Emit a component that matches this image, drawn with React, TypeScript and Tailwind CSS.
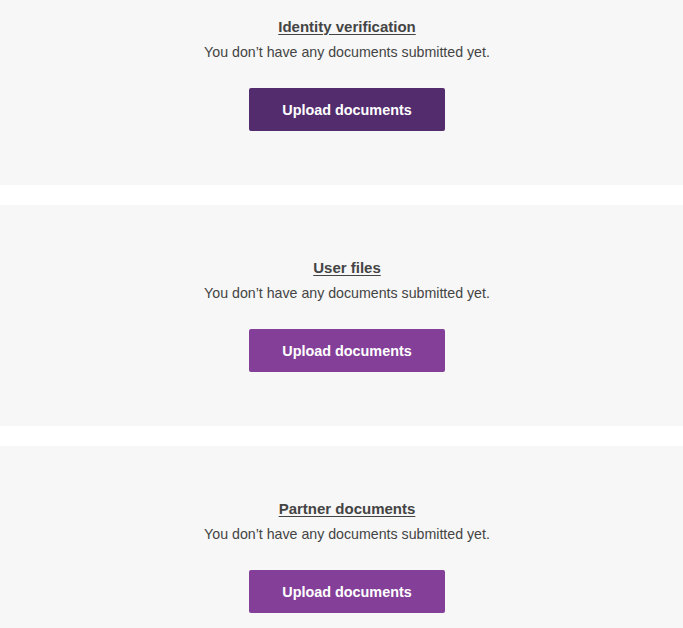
import React from 'react';

const sections = [
  { title: 'Identity verification', btn: 'bg-[#532c6e]' },
  { title: 'User files', btn: 'bg-[#843f99]' },
  { title: 'Partner documents', btn: 'bg-[#843f99]' },
];

export default function App() {
  return (
    <div className="min-h-screen bg-white overflow-hidden font-['Liberation_Sans',Arial,sans-serif] text-[#444]">
      <div className="-mt-[36px] flex flex-col gap-[20px]">
        {sections.map(s => (
          <section key={s.title} className="h-[221px] bg-[#f7f7f7] flex flex-col items-center pt-[53px] pl-[11px]">
            <h2 className="text-[15px] leading-[20px] font-bold underline underline-offset-2">{s.title}</h2>
            <p className="mt-[5px] text-[14.2px] leading-[20px]">You don’t have any documents submitted yet.</p>
            <button className={`mt-[26px] w-[196px] h-[43px] pt-[2px] rounded-[2px] text-white text-[14.4px] font-bold ${s.btn}`}>
              Upload documents
            </button>
          </section>
        ))}
      </div>
    </div>
  );
}
